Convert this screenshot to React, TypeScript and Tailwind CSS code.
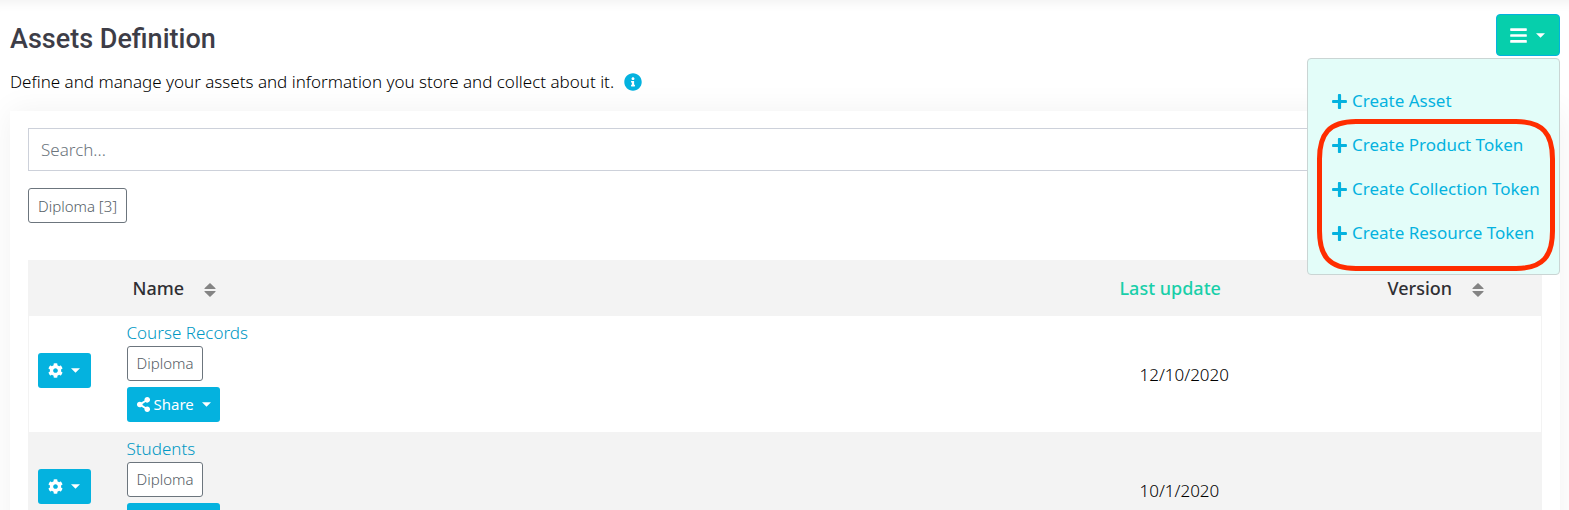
// src/pages/AssetsDefinition.tsx
import { useState } from "react";
import { FaBars, FaCog, FaInfoCircle, FaPlus, FaShareAlt } from "react-icons/fa";

const menuItems = [
  "Create Asset",
  "Create Product Token",
  "Create Collection Token",
  "Create Resource Token",
];

const assets = [
  { id: 1, name: "Course Records", tag: "Diploma", updated: "12/10/2020" },
  { id: 2, name: "Students", tag: "Diploma", updated: "10/1/2020" },
];

const Caret = () => (
  <svg viewBox="0 0 10 5" className="h-[5px] w-[9px]" fill="currentColor" aria-hidden="true">
    <path d="M0 0h10L5 5z" />
  </svg>
);

const SortIcon = () => (
  <svg viewBox="0 0 12 14" className="mt-[3px] h-[14px] w-[12px]" fill="#848484" aria-hidden="true">
    <path d="M6 0 11.500 5.200v.8H.5v-.8zM.5 8h11v.8L6 14 .5 8.800z" />
  </svg>
);

const App = () => {
  const [search, setSearch] = useState("");
  const [open, setOpen] = useState(true);

  return (
    <div className="h-screen overflow-hidden bg-white pr-[9px] pl-[10px] font-['Noto_Sans',sans-serif] text-[17px] leading-[26px] text-[#2f2f33] shadow-[inset_0_14px_14px_-14px_rgba(0,0,0,0.08)]">
      <header className="flex items-start justify-between pt-[14px]">
        <div>
          <h1 className="pt-[9px] font-['Roboto',sans-serif] text-[27px] leading-[32px] font-medium text-[#3d3d47]">
            Assets Definition
          </h1>
          <p className="flex items-center gap-[10px] pt-[14px] font-light text-black">
            Define and manage your assets and information you store and collect about it.
            <FaInfoCircle size={18} className="text-[#04b2df]" />
          </p>
        </div>

        <div className="relative z-10">
          <button
            type="button"
            aria-label="Actions"
            onClick={() => setOpen(!open)}
            className="flex h-[42px] w-16 items-center justify-center gap-2 rounded border border-[#04b2df] bg-[#06cfac] pr-[2px] text-white"
          >
            <FaBars size={19} />
            <Caret />
          </button>

          {open && (
            <div className="absolute top-11 right-0 w-[253px] rounded border border-[#cad5d4] bg-[#e3fdf9] pt-5 pb-[19px]">
              <ul>
                {menuItems.map((label) => (
                  <li key={label}>
                    <a
                      href="#"
                      className="flex h-11 items-center gap-1 pl-[23px] whitespace-nowrap text-[#04b2df]"
                    >
                      <FaPlus size={17} className="shrink-0" />
                      {label}
                    </a>
                  </li>
                ))}
              </ul>
              {/* highlight around the token actions */}
              <svg
                viewBox="0 0 238 152"
                className="pointer-events-none absolute top-[60px] left-[9px] h-[152px] w-[238px]"
                fill="none"
                stroke="#ff2d00"
                strokeWidth="5"
                aria-hidden="true"
              >
                <path d="M39 2.5H199C226 2.5 235.500 15 235.500 40V112C235.500 137 226 149.500 199 149.500H39C12 149.500 2.500 137 2.500 112V40C2.500 15 12 2.500 39 2.500Z" />
              </svg>
            </div>
          )}
        </div>
      </header>

      <main className="mt-4 bg-white px-[18px] pt-[17px] shadow-[0_0_30px_rgba(0,0,0,0.06)]">
        <input
          type="text"
          aria-label="Search"
          value={search}
          onChange={(e) => setSearch(e.target.value)}
          placeholder="Search..."
          className="block h-[43px] w-full border border-[#cdd1da] px-3 font-light placeholder:text-[#6c757d]"
        />

        <button
          type="button"
          className="mt-[17px] flex h-[35px] items-center rounded-[3px] border border-[#6c757d] px-[9px] text-[15px] font-light text-[#555e66]"
        >
          Diploma [3]
        </button>

        <table className="mt-[37px] w-full table-fixed border-collapse border border-[#f3f3f3] text-left">
          <thead>
            <tr className="h-[55px] bg-[#f3f3f3] text-lg">
              <th className="w-[89px]" />
              <th className="px-[15px] font-medium">
                <button type="button" className="flex items-center gap-5">
                  Name
                  <SortIcon />
                </button>
              </th>
              <th className="w-[268px] px-[10px] font-medium text-[#19cfa9]">
                <button type="button">Last update</button>
              </th>
              <th className="w-[164px] px-[10px] font-medium">
                <button type="button" className="flex items-center gap-5">
                  Version
                  <SortIcon />
                </button>
              </th>
            </tr>
          </thead>
          <tbody>
            {assets.map((item) => (
              <tr key={item.id} className="h-[116px] bg-white even:bg-[#f3f3f3]">
                <td className="px-[9px] pb-[6px]">
                  <button
                    type="button"
                    aria-label="Settings"
                    className="flex h-[35px] w-[53px] items-center justify-center gap-2 rounded-[3px] bg-[#04b2df] pr-[2px] text-white"
                  >
                    <FaCog size={15} />
                    <Caret />
                  </button>
                </td>
                <td className="px-[9px] pt-1 pb-[10px] align-top">
                  <a href="#" className="block font-light text-[#0098c4]">
                    {item.name}
                  </a>
                  <button
                    type="button"
                    className="flex h-[35px] items-center rounded-[3px] border border-[#6c757d] bg-white px-[9px] text-[15px] font-light text-[#555e66]"
                  >
                    {item.tag}
                  </button>
                  <button
                    type="button"
                    className="mt-[6px] flex h-[35px] items-center gap-[3px] rounded-[3px] bg-[#04b2df] px-[9px] text-[15px] text-white"
                  >
                    <FaShareAlt size={15} />
                    Share
                    <span className="ml-[5px]">
                      <Caret />
                    </span>
                  </button>
                </td>
                <td className="px-[30px] pt-[2px] font-light text-black">{item.updated}</td>
                <td />
              </tr>
            ))}
          </tbody>
        </table>
      </main>
    </div>
  );
};

export default App;
